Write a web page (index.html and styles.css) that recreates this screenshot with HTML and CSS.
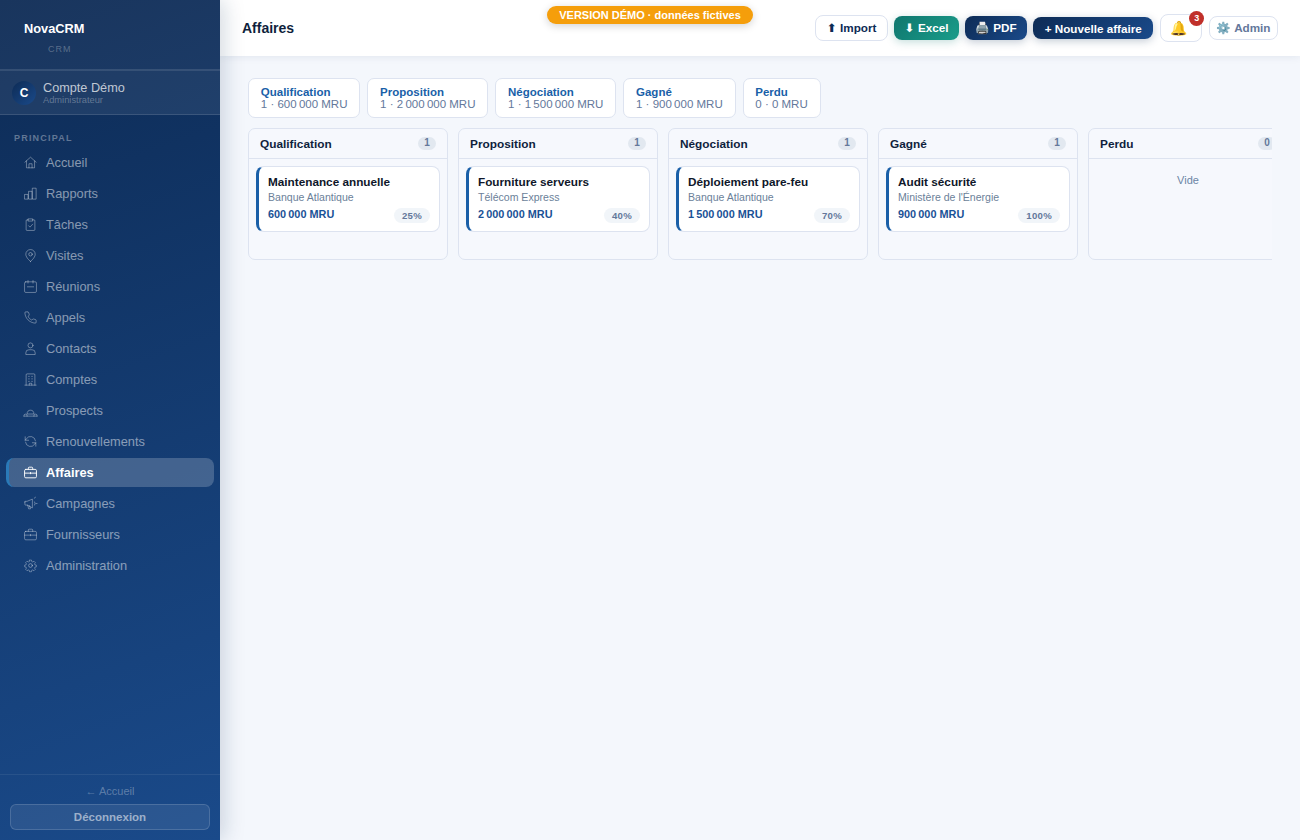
FILE: index.html
```html
<!DOCTYPE html>
<html lang="fr">
<head>
<meta charset="utf-8">
<title>Affaires - NovaCRM</title>
<link rel="stylesheet" href="styles.css">
</head>
<body>
<div class="app">
  <aside class="sidebar">
    <div class="brand">
      <div class="brand-name">NovaCRM</div>
      <div class="brand-sub">CRM</div>
    </div>
    <div class="user">
      <div class="avatar">C</div>
      <div class="user-text">
        <div class="user-name">Compte Démo</div>
        <div class="user-role">Administrateur</div>
      </div>
    </div>
    <div class="nav-title">PRINCIPAL</div>
    <nav class="nav">
      <a class="nav-item"><svg class="ico" viewBox="0 0 24 24"><path d="M3 11.500 12 3.500l9 8M5.500 9.500V20.500h13V9.500M9.500 20.500v-6.500h5v6.500"/></svg><span>Accueil</span></a>
      <a class="nav-item"><svg class="ico" viewBox="0 0 24 24"><path d="M3 13.500h5v7.500H3zM9.500 8.500h5V21h-5zM15.500 3.500h5.500V21h-5.500z"/></svg><span>Rapports</span></a>
      <a class="nav-item"><svg class="ico" viewBox="0 0 24 24"><path d="M8.500 4.500H6.500a1.500 1.500 0 0 0-1.500 1.500v14a1.500 1.500 0 0 0 1.500 1.500h11a1.500 1.500 0 0 0 1.500-1.500V6a1.500 1.500 0 0 0-1.500-1.500h-2M8.500 3h7v3.500h-7zM9 14l2.200 2.200L15.500 11.500"/></svg><span>Tâches</span></a>
      <a class="nav-item"><svg class="ico" viewBox="0 0 24 24"><path d="M12 21.500s-7.500-5.700-7.500-11.500a7.500 7.500 0 0 1 15 0c0 5.800-7.500 11.500-7.500 11.500z"/><circle cx="12" cy="10" r="2.800"/></svg><span>Visites</span></a>
      <a class="nav-item"><svg class="ico" viewBox="0 0 24 24"><rect x="2.500" y="4.500" width="19" height="17" rx="2"/><path d="M8 2.500V6.500M16 2.500V6.500M7 12.500h10"/></svg><span>Réunions</span></a>
      <a class="nav-item"><svg class="ico" viewBox="0 0 24 24"><path d="M6.500 3h-2A1.500 1.500 0 0 0 3 4.700C3.700 13.500 10.500 20.300 19.300 21a1.500 1.500 0 0 0 1.700-1.500v-2.800a1.500 1.500 0 0 0-1.100-1.400l-3-.9a1.500 1.500 0 0 0-1.500.4l-1.300 1.400c-2.600-1.200-4.800-3.400-6-6l1.500-1.300a1.500 1.500 0 0 0 .4-1.500l-.9-3A1.500 1.500 0 0 0 7.500 3z"/></svg><span>Appels</span></a>
      <a class="nav-item"><svg class="ico" viewBox="0 0 24 24"><circle cx="12" cy="7" r="4"/><path d="M4.500 21v-2a5 5 0 0 1 5-5h5a5 5 0 0 1 5 5v2z"/></svg><span>Contacts</span></a>
      <a class="nav-item"><svg class="ico" viewBox="0 0 24 24"><path d="M5 21V4.500A1.500 1.500 0 0 1 6.500 3h11A1.500 1.500 0 0 1 19 4.500V21M3 21h18M9 7h1M14 7h1M9 11h1M14 11h1M9 15h1M14 15h1M10 21v-3h4v3"/></svg><span>Comptes</span></a>
      <a class="nav-item"><svg class="ico" viewBox="0 0 24 24"><path d="M6.500 17c0-3.500 2.200-5.500 5.500-5.500s5.500 2 5.500 5.500zM1.500 21v-.7a2.500 2.500 0 0 1 5 0v.7M17.500 21v-.7a2.500 2.500 0 0 1 5 0v.7M1.500 21h21"/></svg><span>Prospects</span></a>
      <a class="nav-item"><svg class="ico" viewBox="0 0 24 24"><path d="M20 11a8 8 0 0 0-14.500-3.500L3.500 10M3.500 4.500V10H9M4 13a8 8 0 0 0 14.500 3.500l2-2.500M20.500 19.500V14H15"/></svg><span>Renouvellements</span></a>
      <a class="nav-item active"><svg class="ico" viewBox="0 0 24 24"><rect x="2.500" y="7" width="19" height="13.500" rx="2"/><path d="M8.500 7V5a1.500 1.500 0 0 1 1.500-1.500h4A1.500 1.500 0 0 1 15.500 5v2M2.500 13h19M12 12v2"/></svg><span>Affaires</span></a>
      <a class="nav-item"><svg class="ico" viewBox="0 0 24 24"><path d="M3 9.500v4a1 1 0 0 0 1 1h2.500l8.500 4.500V5L6.500 8.500H4a1 1 0 0 0-1 1zM7.500 14.500 9 20.500h3l-1.500-5M18 9a3.500 3.500 0 0 1 0 6M18 3.500l2-1.500M21 12h1.500"/></svg><span>Campagnes</span></a>
      <a class="nav-item"><svg class="ico" viewBox="0 0 24 24"><rect x="2.500" y="7" width="19" height="13.500" rx="2"/><path d="M8.500 7V5a1.500 1.500 0 0 1 1.500-1.500h4A1.500 1.500 0 0 1 15.500 5v2M2.500 13h19M12 12v2"/></svg><span>Fournisseurs</span></a>
      <a class="nav-item"><svg class="ico" viewBox="0 0 24 24"><circle cx="12" cy="12" r="3"/><path d="M10.300 3h3.400l.5 2.600 1.700.8 2.300-1.300 2.400 2.400-1.400 2.200.7 1.800 2.500.5v3l-2.500.5-.7 1.800 1.400 2.200-2.400 2.400-2.300-1.400-1.700.7-.5 2.600h-3.400l-.5-2.600-1.700-.7-2.300 1.400-2.400-2.400 1.400-2.200-.7-1.800-2.500-.5v-3l2.500-.5.700-1.800-1.400-2.200 2.400-2.400 2.300 1.300 1.700-.8z" transform="translate(1.200 .6) scale(.9)"/></svg><span>Administration</span></a>
    </nav>
    <div class="side-foot">
      <a class="back">← Accueil</a>
      <button class="logout">Déconnexion</button>
    </div>
  </aside>

  <main class="main">
    <header class="topbar">
      <h1 class="title">Affaires</h1>
      <div class="demo">VERSION DÉMO · données fictives</div>
      <div class="actions">
        <button class="btn btn-light">&#x2B06;&#xFE0E; Import</button>
        <button class="btn btn-green">&#x2B07;&#xFE0E; Excel</button>
        <button class="btn btn-navy">🖨️ PDF</button>
        <button class="btn btn-navy btn-new">+ Nouvelle affaire</button>
        <button class="bell">🔔<span class="bell-count">3</span></button>
        <button class="admin">⚙️ Admin</button>
      </div>
    </header>

    <section class="content">
      <div class="chips">
        <div class="chip"><b>Qualification</b><span>1 · 600&#8239;000 MRU</span></div>
        <div class="chip"><b>Proposition</b><span>1 · 2&#8239;000&#8239;000 MRU</span></div>
        <div class="chip"><b>Négociation</b><span>1 · 1&#8239;500&#8239;000 MRU</span></div>
        <div class="chip"><b>Gagné</b><span>1 · 900&#8239;000 MRU</span></div>
        <div class="chip"><b>Perdu</b><span>0 · 0 MRU</span></div>
      </div>
      <div class="board">
        <div class="col">
          <div class="col-head"><span>Qualification</span><em>1</em></div>
          <div class="col-body">
            <article class="card">
              <h3>Maintenance annuelle</h3>
              <p>Banque Atlantique</p>
              <div class="card-foot"><strong>600&#8239;000 MRU</strong><small>25%</small></div>
            </article>
          </div>
        </div>
        <div class="col">
          <div class="col-head"><span>Proposition</span><em>1</em></div>
          <div class="col-body">
            <article class="card">
              <h3>Fourniture serveurs</h3>
              <p>Télécom Express</p>
              <div class="card-foot"><strong>2&#8239;000&#8239;000 MRU</strong><small>40%</small></div>
            </article>
          </div>
        </div>
        <div class="col">
          <div class="col-head"><span>Négociation</span><em>1</em></div>
          <div class="col-body">
            <article class="card">
              <h3>Déploiement pare-feu</h3>
              <p>Banque Atlantique</p>
              <div class="card-foot"><strong>1&#8239;500&#8239;000 MRU</strong><small>70%</small></div>
            </article>
          </div>
        </div>
        <div class="col">
          <div class="col-head"><span>Gagné</span><em>1</em></div>
          <div class="col-body">
            <article class="card">
              <h3>Audit sécurité</h3>
              <p>Ministère de l'Énergie</p>
              <div class="card-foot"><strong>900&#8239;000 MRU</strong><small>100%</small></div>
            </article>
          </div>
        </div>
        <div class="col">
          <div class="col-head"><span>Perdu</span><em>0</em></div>
          <div class="col-body"><div class="empty">Vide</div></div>
        </div>
      </div>
    </section>
  </main>
</div>
</body>
</html>
```
FILE: styles.css
```css
* { box-sizing: border-box; }
html, body { margin: 0; height: 100%; }
body {
  font-family: "Liberation Sans", Arial, sans-serif;
  background: #f4f7fc;
  color: #0f172a;
  overflow: hidden;
}
.app { display: flex; height: 840px; }

.sidebar {
  width: 220px;
  flex: none;
  display: flex;
  flex-direction: column;
  background: linear-gradient(160deg, #0d2b55 0%, #1a4a8a 100%);
  box-shadow: 4px 0 20px rgba(13, 43, 85, .18);
  position: relative;
  z-index: 2;
}
.brand {
  height: 71px;
  padding: 21px 24px 0;
  background: rgba(255, 255, 255, .05);
  border-bottom: 2px solid rgba(255, 255, 255, .12);
}
.brand-name { font-size: 12.800px; font-weight: 700; color: #fff; line-height: 16px; }
.brand-sub {
  margin: 7px 0 0 24px;
  font-size: 9px;
  letter-spacing: 1px;
  line-height: 11px;
  color: rgba(255, 255, 255, .28);
}
.user {
  height: 44px;
  display: flex;
  align-items: center;
  gap: 7px;
  padding: 0 12px;
  background: rgba(255, 255, 255, .07);
  border-bottom: 1px solid rgba(255, 255, 255, .12);
}
.avatar {
  width: 24px;
  height: 24px;
  border-radius: 50%;
  background: linear-gradient(135deg, #0d2b55, #1a4a8a);
  color: #fff;
  font-size: 12px;
  font-weight: 700;
  display: flex;
  align-items: center;
  justify-content: center;
}
.user-name { font-size: 12.700px; line-height: 14px; color: rgba(255, 255, 255, .72); }
.user-role { font-size: 9.300px; line-height: 10px; color: rgba(255, 255, 255, .3); }
.nav-title {
  margin: 18px 0 0 14px;
  font-size: 9px;
  font-weight: 700;
  letter-spacing: 1.200px;
  line-height: 11px;
  color: rgba(255, 255, 255, .35);
}
.nav { display: flex; flex-direction: column; gap: 2px; padding: 4px 6px 0; }
.nav-item {
  height: 29px;
  display: flex;
  align-items: center;
  gap: 8px;
  padding: 0 0 0 14px;
  border-radius: 8px;
  border-left: 3px solid transparent;
  font-size: 12.800px;
  color: rgba(255, 255, 255, .5);
}
.ico {
  width: 15px;
  height: 15px;
  flex: none;
  fill: none;
  stroke: rgba(255, 255, 255, .38);
  stroke-width: 1.500;
  stroke-linecap: round;
  stroke-linejoin: round;
}
.nav-item.active {
  background: rgba(255, 255, 255, .2);
  border-left-color: #2a7ab8;
  color: #fff;
  font-weight: 700;
}
.nav-item.active .ico { stroke: #fff; }
.side-foot {
  margin-top: auto;
  height: 66px;
  border-top: 1px solid rgba(255, 255, 255, .07);
  padding: 10px 10px 0;
  text-align: center;
}
.back { display: block; font-size: 11px; line-height: 13px; color: rgba(255, 255, 255, .3); }
.logout {
  display: block;
  width: 100%;
  height: 26px;
  margin-top: 6px;
  border: 1px solid rgba(255, 255, 255, .15);
  border-radius: 6px;
  background: rgba(255, 255, 255, .08);
  color: rgba(255, 255, 255, .55);
  font: 700 11.520px "Liberation Sans", Arial, sans-serif;
}

.main { flex: 1; min-width: 0; display: flex; flex-direction: column; }
.topbar {
  height: 56px;
  flex: none;
  position: relative;
  display: flex;
  align-items: center;
  justify-content: space-between;
  padding: 0 22px;
  background: #fff;
  box-shadow: 0 1px 8px rgba(13, 43, 85, .08);
}
.title { margin: 0; font-size: 14px; line-height: 16px; font-weight: 700; color: #0f1f3d; }
.demo {
  position: absolute;
  left: 327px;
  top: 6px;
  width: 206px;
  height: 18px;
  border-radius: 9px;
  background: #f59e0b;
  box-shadow: 0 2px 8px rgba(0, 0, 0, .18);
  color: #fff;
  font-size: 11px;
  font-weight: 700;
  line-height: 18px;
  text-align: center;
}
.actions { display: flex; align-items: center; gap: 6px; }
.btn {
  height: 24px;
  padding: 0 10.500px;
  border: 0;
  border-radius: 8px;
  font: 700 11.700px "Liberation Sans", Arial, "DejaVu Sans", "Noto Color Emoji", sans-serif;
  color: #fff;
  white-space: nowrap;
}
.btn-light { height: 26px; padding: 0 11px; background: #fff; border: 1px solid #dde3f0; color: #0d2b55; }
.btn-green {
  background: linear-gradient(135deg, #0f766e, #1a9d8a);
  box-shadow: 0 2px 8px rgba(15, 118, 110, .25);
}
.btn-navy {
  background: linear-gradient(135deg, #0d2b55, #1a4a8a);
  box-shadow: 0 2px 8px rgba(13, 43, 85, .25);
}
.btn-new { height: 22px; padding: 0 11.500px; }
.bell {
  position: relative;
  width: 42px;
  height: 28px;
  margin-left: 1px;
  padding: 0 4px 0 0;
  background: #fff;
  border: 1px solid #dde3f0;
  border-radius: 8px;
  font: 14px "Liberation Sans", Arial, "Noto Color Emoji", sans-serif;
}
.bell-count {
  position: absolute;
  top: -4px;
  right: -3px;
  width: 15px;
  height: 15px;
  border-radius: 50%;
  background: #c0302a;
  color: #fff;
  font-size: 9px;
  font-weight: 700;
  line-height: 15px;
  text-align: center;
}
.admin {
  height: 24px;
  margin-left: 1px;
  padding: 0 6.500px;
  background: #fff;
  border: 1px solid #dde3f0;
  border-radius: 8px;
  color: #64789b;
  font: 700 11.700px "Liberation Sans", Arial, "Noto Color Emoji", sans-serif;
}

.content { flex: 1; padding: 22px 28px 0; min-width: 0; }
.chips { display: flex; gap: 7px; }
.chip {
  height: 40px;
  padding: 7px 11.800px 0;
  background: #fff;
  border: 1px solid #dde3f0;
  border-radius: 7px;
  font-size: 11.500px;
  line-height: 12px;
}
.chip b { display: block; color: #1a5fa8; }
.chip span { display: block; color: #64789b; white-space: nowrap; }
.board { display: flex; gap: 10px; margin-top: 10px; overflow: hidden; }
.col {
  width: 200px;
  height: 132px;
  flex: none;
  background: #f6f8fd;
  border: 1px solid #dde3f0;
  border-radius: 7px;
}
.col-head {
  height: 30px;
  display: flex;
  align-items: center;
  justify-content: space-between;
  padding: 0 11px;
  border-bottom: 1px solid #dde3f0;
  font-size: 11.840px;
  font-weight: 700;
  color: #0f1f3d;
}
.col-head em {
  width: 18px;
  height: 13px;
  border-radius: 7px;
  background: #e2e8f0;
  color: #64789b;
  font-style: normal;
  font-size: 10px;
  line-height: 12px;
  text-align: center;
}
.col-body { padding: 7px; }
.card {
  height: 66px;
  padding: 8px 9px 0 9px;
  background: #fff;
  border: 1px solid #dde3f0;
  border-left: 3px solid #1a5fa8;
  border-radius: 8px;
}
.card h3 { margin: 0; font-size: 11.760px; line-height: 14px; font-weight: 700; color: #0f172a; }
.card p { margin: 2px 0 0; font-size: 10.560px; line-height: 13px; color: #6b7f99; }
.card-foot { display: flex; justify-content: space-between; }
.card-foot strong { font-size: 10.880px; line-height: 14px; margin-top: 3px; color: #1a5296; }
.card-foot small {
  height: 15px;
  margin-top: 4px;
  padding: 0 8px;
  border-radius: 8px;
  background: #f1f5f9;
  color: #64789b;
  font-size: 9.600px;
  letter-spacing: .3px;
  font-weight: 700;
  line-height: 16px;
}
.empty { padding-top: 8px; text-align: center; font-size: 11px; line-height: 13px; color: #6b85a5; }
```
